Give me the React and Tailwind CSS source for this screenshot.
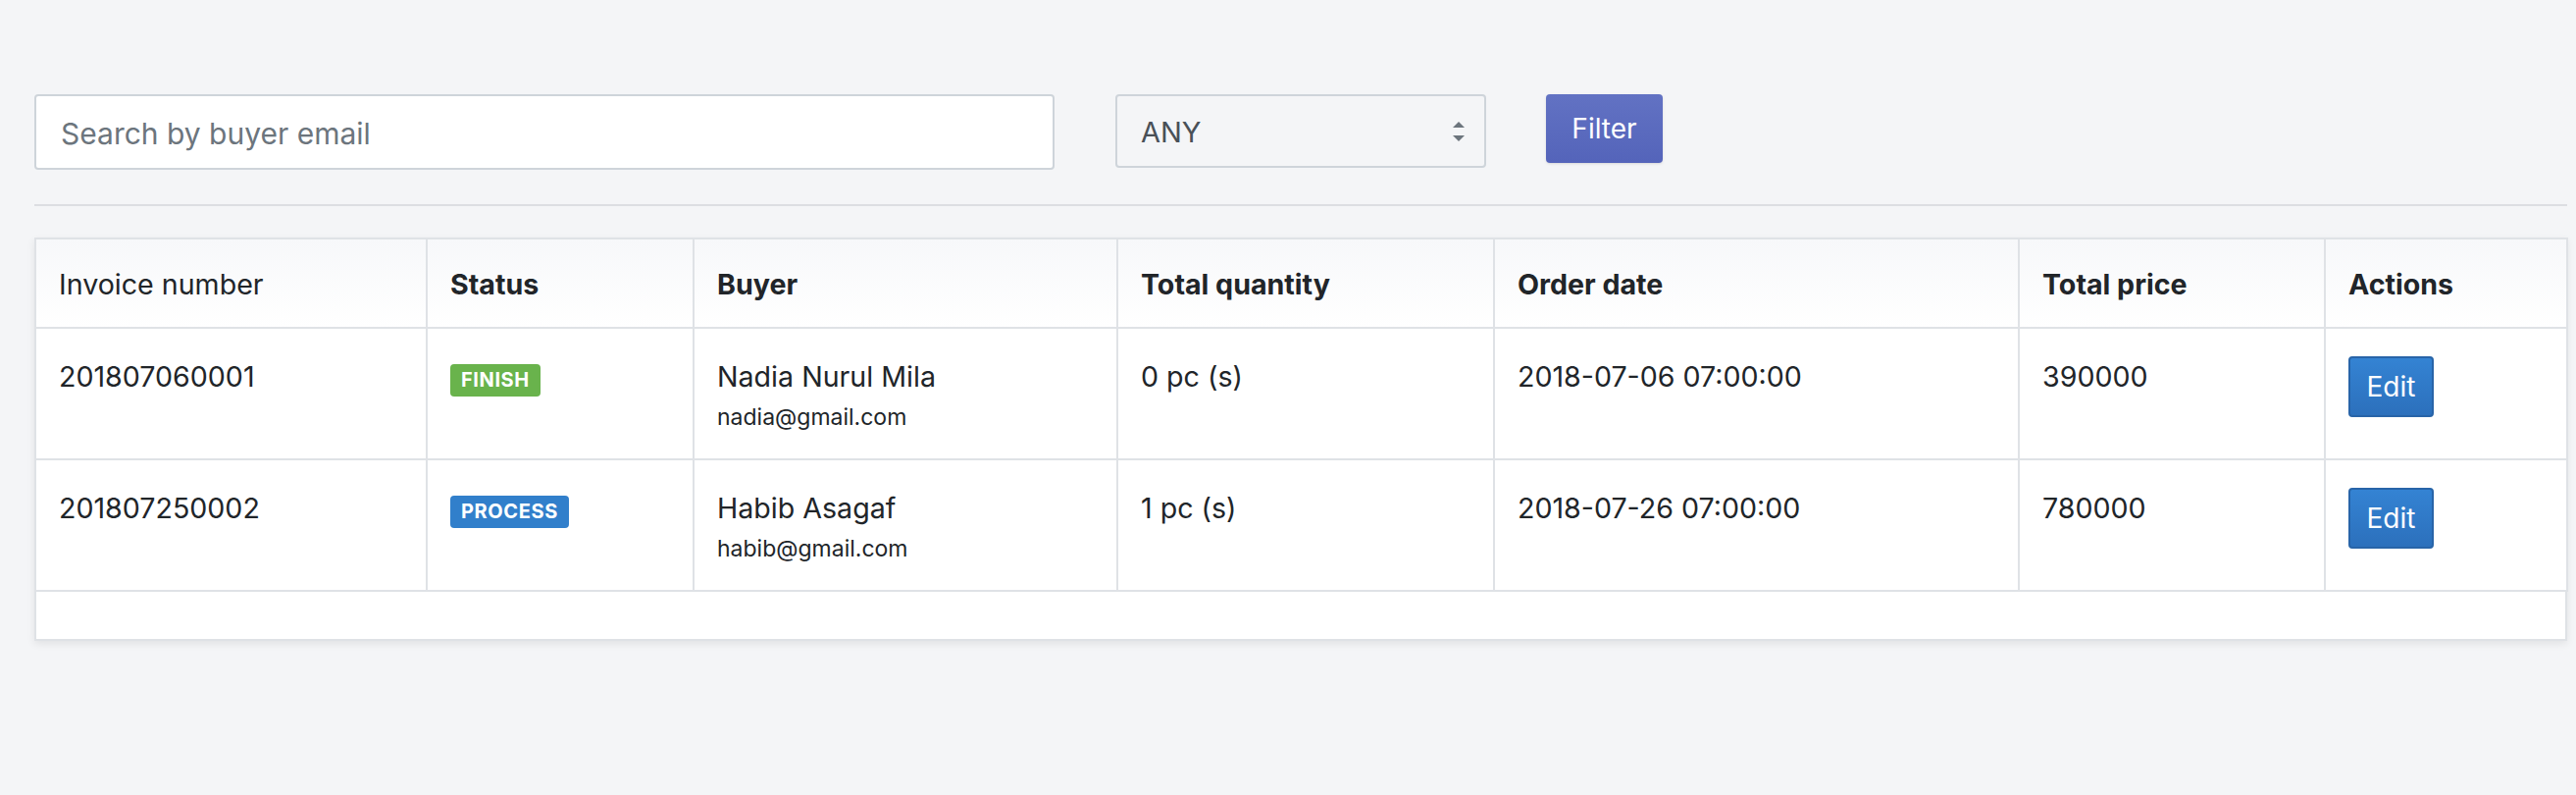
import React from 'react';

const orders = [
  {
    invoice: '201807060001',
    status: 'FINISH',
    buyer: 'Nadia Nurul Mila',
    email: 'nadia@gmail.com',
    quantity: '0 pc (s)',
    date: '2018-07-06 07:00:00',
    price: '390000',
  },
  {
    invoice: '201807250002',
    status: 'PROCESS',
    buyer: 'Habib Asagaf',
    email: 'habib@gmail.com',
    quantity: '1 pc (s)',
    date: '2018-07-26 07:00:00',
    price: '780000',
  },
];

const StatusBadge = ({ status }) => {
  const color = status === 'FINISH' ? 'bg-[#69b34c]' : 'bg-[#317fcb]';
  return (
    <span className={`inline-flex items-center h-[33px] px-[11px] rounded-[4px] text-white text-[20px] font-bold tracking-[0.6px] ${color}`}>
      {status}
    </span>
  );
};

const App = () => {
  const cell = 'border-2 border-[#dfe2e6] px-[23px] align-top pt-[28px]';
  const head = 'border-2 border-[#dfe2e6] px-[23px] text-left align-middle h-[91px] pt-[3px]';

  return (
    <div className="min-h-[810px] bg-[#f4f5f7] pl-[35px] pr-[9px] pt-[96px] text-[#212529]" style={{ fontFamily: 'Inter, "Noto Sans", sans-serif' }}>
      {/* filters */}
      <div className="flex items-start">
        <input
          type="text"
          placeholder="Search by buyer email"
          className="w-[1040px] h-[77px] bg-white border-2 border-[#ced4da] rounded-[4px] px-[25px] pt-[3px] text-[30px] text-[#495057] placeholder-[#6c757d] outline-none"
        />
        <div className="ml-[62px] w-[378px] h-[75px] border-2 border-[#ced4da] rounded-[4px] bg-[#f4f5f7] flex items-center justify-between pl-[24px] pr-[20px]">
          <span className="text-[29px] text-[#495057] pt-[3px]">ANY</span>
          <svg width="12" height="20" viewBox="0 0 12 20" className="text-[#6c757d]">
            <path d="M6 0 L12 6 L0 6 Z" fill="currentColor" />
            <path d="M0 14 L12 14 L6 20 Z" fill="currentColor" />
          </svg>
        </div>
        <button className="ml-[61px] w-[119px] h-[70px] rounded-[4px] bg-gradient-to-b from-[#6272c3] to-[#5464ba] text-white text-[28px] shadow-sm">
          Filter
        </button>
      </div>

      <hr className="mt-[35px] border-t-2 border-[#dcdee2]" />

      {/* orders table */}
      <div className="mt-[32px] bg-white shadow-[0_3px_8px_rgba(0,0,0,0.08)]">
        <table className="w-full table-fixed border-collapse text-[28.6px]">
          <colgroup>
            <col className="w-[399px]" />
            <col className="w-[272px]" />
            <col className="w-[432px]" />
            <col className="w-[384px]" />
            <col className="w-[535px]" />
            <col className="w-[312px]" />
            <col className="w-[247px]" />
          </colgroup>
          <thead className="bg-gradient-to-b from-[#f7f8fa] to-white">
            <tr>
              <th className={`${head} font-normal`}>Invoice number</th>
              <th className={`${head} font-bold`}>Status</th>
              <th className={`${head} font-bold`}>Buyer</th>
              <th className={`${head} font-bold`}>Total quantity</th>
              <th className={`${head} font-bold`}>Order date</th>
              <th className={`${head} font-bold`}>Total price</th>
              <th className={`${head} font-bold`}>Actions</th>
            </tr>
          </thead>
          <tbody>
            {orders.map((o) => (
              <tr key={o.invoice} className="h-[134px]">
                <td className={cell}>{o.invoice}</td>
                <td className={`${cell} pt-[28px]`}>
                  <StatusBadge status={o.status} />
                </td>
                <td className={cell}>
                  <div className="leading-[42px]">{o.buyer}</div>
                  <div className="text-[23px] leading-[32px] mt-[4px]">{o.email}</div>
                </td>
                <td className={cell}>{o.quantity}</td>
                <td className={cell}>{o.date}</td>
                <td className={cell}>{o.price}</td>
                <td className={`${cell} pt-[23px]`}>
                  <button className="w-[87px] h-[62px] rounded-[4px] border-2 border-[#2864a8] bg-gradient-to-b from-[#3483d3] to-[#2c70bc] text-white text-[28px]">
                    Edit
                  </button>
                </td>
              </tr>
            ))}
          </tbody>
        </table>
        <div className="h-[50px] border-2 border-t-0 border-[#dfe2e6]" />
      </div>
    </div>
  );
};

export default App;
